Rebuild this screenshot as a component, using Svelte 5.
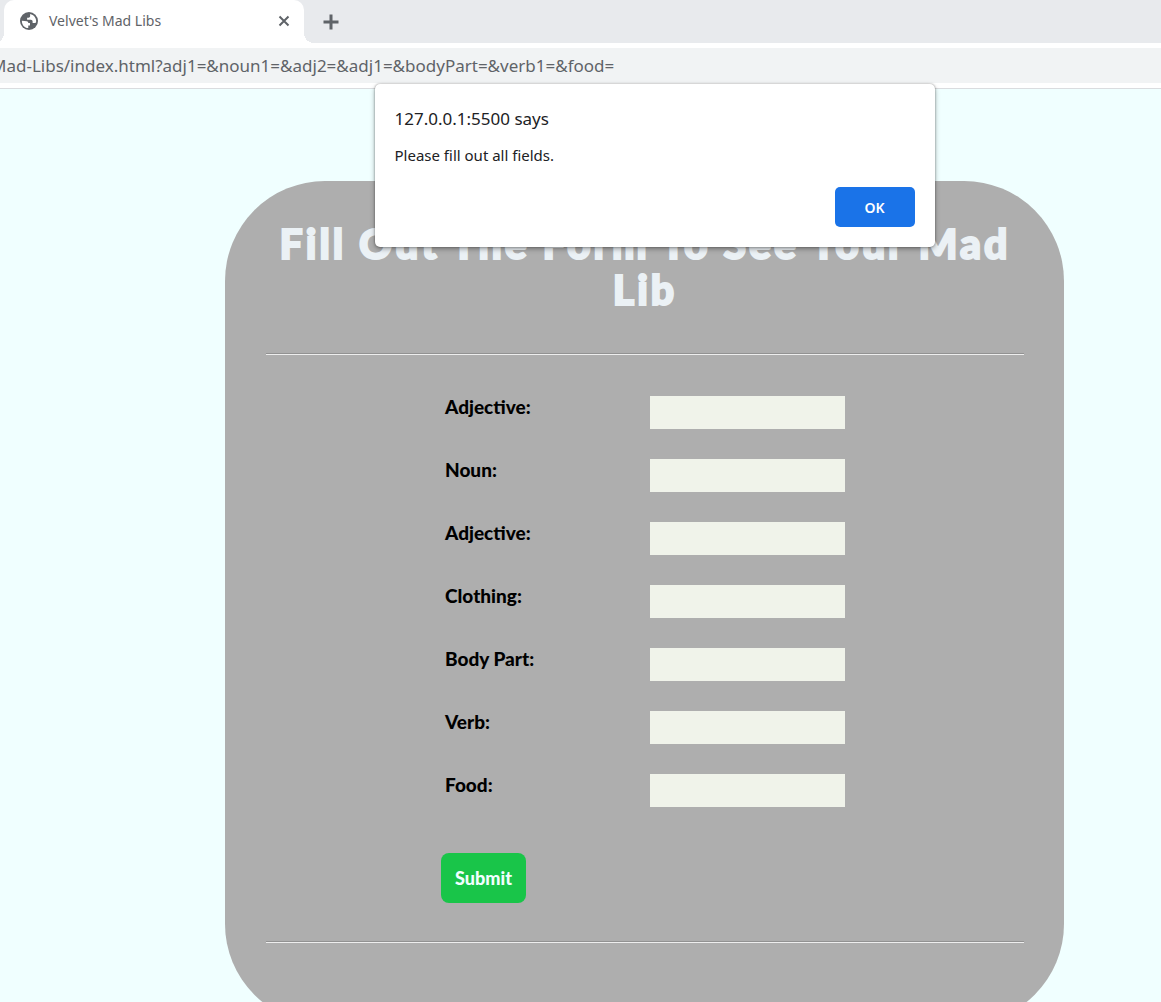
<script>
  const fields = $state([
    { id: 'adj1', label: 'Adjective:', value: '' },
    { id: 'noun1', label: 'Noun:', value: '' },
    { id: 'adj2', label: 'Adjective:', value: '' },
    { id: 'clothing', label: 'Clothing:', value: '' },
    { id: 'bodyPart', label: 'Body Part:', value: '' },
    { id: 'verb1', label: 'Verb:', value: '' },
    { id: 'food', label: 'Food:', value: '' }
  ]);
  let alertOpen = $state(true);
  let address = $state('Mad-Libs/index.html?adj1=&noun1=&adj2=&adj1=&bodyPart=&verb1=&food=');

  function submit(event) {
    event.preventDefault();
    alertOpen = fields.some((field) => !field.value);
  }
</script>

<div class="window">
  <header class="tabs">
    <div class="tab">
      <svg class="globe" viewBox="0 0 24 24" aria-hidden="true">
        <circle cx="12" cy="12" r="12" fill="#5f6368" />
        <path
          d="M2.5 11.5 6 12l3 .2c1.300 0 2 1 2 2.300h2.300v3.500h-2.300v3.300C6 21 2.300 17 2.500 11.500ZM13.500 2.600v3c0 1-1 1.900-2.100 1.900H9.500v2.800h5c1.300 0 2.300 1 2.300 2.300v1.900h3.500c.8 0 1-.6 1.200-1.500.4-5-3-9.400-8-10.400Z"
          fill="#fff"
        />
      </svg>
      <span class="tab-title">Velvet's Mad Libs</span>
      <button class="icon" type="button" aria-label="Close tab">
        <svg width="12" height="12" viewBox="0 0 12 12"><path d="M1.500 1.500 10.500 10.500M10.500 1.500 1.500 10.500" /></svg>
      </button>
    </div>
    <button class="icon add" type="button" aria-label="New tab">
      <svg width="16" height="16" viewBox="0 0 16 16"><path d="M8 .5V15.500M.5 8H15.500" /></svg>
    </button>
  </header>

  <div class="toolbar">
    <input class="address" type="text" aria-label="Address" spellcheck="false" bind:value={address} />
  </div>

  <main>
    <section class="card">
      <h1>Fill Out The Form To See Your Mad Lib</h1>
      <hr />
      <form onsubmit={submit} novalidate>
        {#each fields as field (field.id)}
          <div class="row">
            <label for={field.id}>{field.label}</label>
            <input id={field.id} type="text" bind:value={field.value} />
          </div>
        {/each}
        <button class="submit" type="submit">Submit</button>
      </form>
      <hr />
    </section>
  </main>

  {#if alertOpen}
    <div class="dialog" role="alertdialog" aria-labelledby="alert-title" aria-describedby="alert-text">
      <h2 id="alert-title">127.0.0.1:5500 says</h2>
      <p id="alert-text">Please fill out all fields.</p>
      <button type="button" onclick={() => (alertOpen = false)}>OK</button>
    </div>
  {/if}
</div>

<style>
  .window {
    position: relative;
    height: 100vh;
    overflow: hidden;
    background: #f0ffff;
    font-family: 'Noto Sans', 'Open Sans', sans-serif;
    box-sizing: border-box;
  }

  .window :global(*) {
    box-sizing: border-box;
  }

  button,
  input {
    border: 0;
    border-radius: 0;
    padding: 0;
    font-family: inherit;
  }

  .tabs {
    display: flex;
    height: 43px;
    padding-left: 4px;
    background: #e8eaed;
  }

  .tab {
    position: relative;
    display: flex;
    align-items: center;
    width: 300px;
    padding: 0 11px 2px 16px;
    border-radius: 10px 10px 0 0;
    background: #fff;
  }

  .tab::before,
  .tab::after {
    content: '';
    position: absolute;
    bottom: 0;
    width: 10px;
    height: 10px;
  }

  .tab::before {
    right: 100%;
    background: radial-gradient(circle at 0 0, #e8eaed 10px, #fff 10px);
  }

  .tab::after {
    left: 100%;
    background: radial-gradient(circle at 100% 0, #e8eaed 10px, #fff 10px);
  }

  .globe {
    width: 18px;
    height: 18px;
  }

  .tab-title {
    flex: 1;
    margin-left: 11px;
    color: #5f6368;
    font-size: 14px;
    line-height: 20px;
  }

  .icon {
    display: flex;
    align-items: center;
    justify-content: center;
    width: 18px;
    height: 18px;
    background: none;
  }

  .icon path {
    fill: none;
    stroke: #5f6368;
    stroke-width: 2;
  }

  .add {
    align-self: center;
    margin-left: 18px;
  }

  .add path {
    stroke-width: 3;
  }

  .toolbar {
    padding: 5px 0;
    border-bottom: 1px solid #dadcdf;
    background: #fff;
  }

  .address {
    display: block;
    width: 100%;
    height: 35px;
    background: #f1f3f4;
    color: #5f6368;
    font-size: 17px;
    text-indent: -9px;
  }

  main {
    padding: 92px 97px 0 225px;
  }

  .card {
    padding: 40px 40px 81px 41px;
    border-radius: 100px;
    background: #aeaeae;
    font-family: Lato, sans-serif;
    font-weight: 900;
  }

  h1 {
    margin: 0 0 40px;
    color: #ebf1f5;
    font-size: 41px;
    font-weight: 900;
    line-height: 46px;
    letter-spacing: 3px;
    text-align: center;
    -webkit-text-stroke: 2px #ebf1f5;
  }

  hr {
    height: 2px;
    margin: 0;
    border: 0;
    border-top: 1px solid #929292;
    background: #eee;
  }

  form {
    display: flex;
    flex-direction: column;
    gap: 30px;
    width: 408px;
    margin: 0 auto;
    padding: 41px 0 38px;
  }

  .row {
    display: flex;
    justify-content: space-between;
    padding: 0 4px;
  }

  label {
    color: #000;
    font-size: 19px;
    line-height: 22px;
  }

  .row input {
    width: 195px;
    height: 33px;
    padding: 0 8px;
    background: #f0f3ea;
    font-size: 16px;
  }

  .submit {
    align-self: flex-start;
    width: 85px;
    height: 50px;
    margin-top: 16px;
    border-radius: 8px;
    background: #19c549;
    color: #f0ffff;
    font-size: 18px;
    font-weight: 900;
  }

  .dialog {
    position: absolute;
    top: 84px;
    left: calc(50% - 206px);
    display: flex;
    flex-direction: column;
    width: 560px;
    padding: 23px 20px 20px;
    border-radius: 5px;
    background: #fff;
    box-shadow: 0 0 2px rgba(0, 0, 0, 0.4), 0 2px 5px rgba(0, 0, 0, 0.35);
    color: #202124;
  }

  h2 {
    margin: 0;
    font-size: 17px;
    font-weight: 400;
    line-height: 24px;
  }

  p {
    margin: 14px 0 21px;
    font-size: 15px;
    line-height: 21px;
  }

  .dialog button {
    align-self: flex-end;
    width: 80px;
    height: 40px;
    border-radius: 5px;
    background: #1a73e8;
    color: #fff;
    font-size: 14px;
    font-weight: 600;
  }
</style>
